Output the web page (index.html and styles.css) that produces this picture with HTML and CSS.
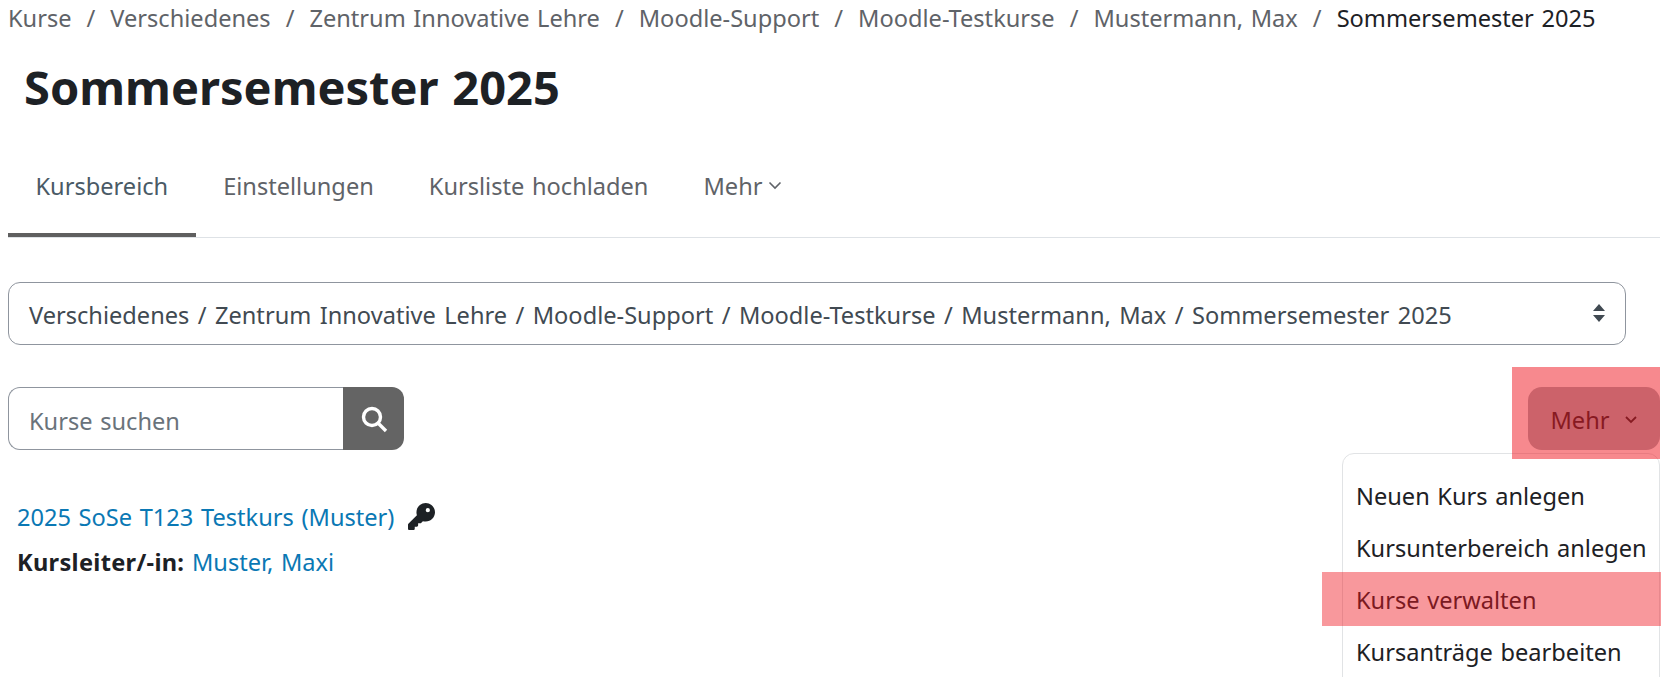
FILE: index.html
```html
<!DOCTYPE html>
<html lang="de">
<head>
    <meta charset="UTF-8">
    <title>Sommersemester 2025</title>
    <link rel="stylesheet" href="styles.css">
</head>
<body>
    <div class="page">
        <nav class="breadcrumb">
            <a href="#">Kurse</a><span class="sep">/</span>
            <a href="#">Verschiedenes</a><span class="sep">/</span>
            <a href="#">Zentrum Innovative Lehre</a><span class="sep">/</span>
            <a href="#">Moodle-Support</a><span class="sep">/</span>
            <a href="#">Moodle-Testkurse</a><span class="sep">/</span>
            <a href="#">Mustermann, Max</a><span class="sep">/</span>
            <span class="current">Sommersemester 2025</span>
        </nav>

        <h1 class="page-title">Sommersemester 2025</h1>

        <div class="tabs">
            <a href="#" class="tab active">Kursbereich</a>
            <a href="#" class="tab">Einstellungen</a>
            <a href="#" class="tab">Kursliste hochladen</a>
            <a href="#" class="tab">Mehr
                <svg class="tab-caret" viewBox="0 0 14 9"><path d="M1.5 1.5 7 7l5.5-5.5"/></svg>
            </a>
        </div>

        <div class="category-select">
            <span>Verschiedenes / Zentrum Innovative Lehre / Moodle-Support / Moodle-Testkurse / Mustermann, Max / Sommersemester 2025</span>
            <svg class="select-arrows" viewBox="0 0 14 20"><path d="M7 1 13 8H1zM7 19 1 12h12z"/></svg>
        </div>

        <div class="toolbar">
            <div class="search">
                <div class="search-input">Kurse suchen</div>
                <button class="search-button">
                    <svg viewBox="0 0 28 28"><circle cx="12" cy="12" r="8.5"/><path d="M18 18l8 8"/></svg>
                </button>
            </div>
            <div class="more">
                <button class="more-button">Mehr
                    <svg class="more-caret" viewBox="0 0 14 9"><path d="M2 2l5 5 5-5"/></svg>
                </button>
                <div class="more-menu">
                    <a href="#">Neuen Kurs anlegen</a>
                    <a href="#">Kursunterbereich anlegen</a>
                    <a href="#">Kurse verwalten</a>
                    <a href="#">Kursanträge bearbeiten</a>
                </div>
                <div class="mark mark-button"></div>
                <div class="mark mark-item"></div>
            </div>
        </div>

        <div class="course">
            <div class="course-name">
                <a href="#">2025 SoSe T123 Testkurs (Muster)</a>
                <svg class="key" viewBox="0 0 512 512"><path d="M336 0c-97 0-176 79-176 176 0 19 3 37 9 54L7 392c-4 4-7 10-7 17v79c0 13 11 24 24 24h80c13 0 24-11 24-24v-40h40c13 0 24-11 24-24v-40h40c6 0 12-3 17-7l33-33c17 6 35 9 54 9 97 0 176-79 176-176S433 0 336 0zm40 176a40 40 0 1 1 0-80 40 40 0 0 1 0 80z"/></svg>
            </div>
            <div class="course-teacher"><strong>Kursleiter/-in:</strong> <a href="#">Muster, Maxi</a></div>
        </div>
    </div>
</body>
</html>
```

FILE: styles.css
```css
* {
    margin: 0;
    padding: 0;
    box-sizing: border-box;
}

html, body {
    height: 100%;
    overflow: hidden;
}

body {
    font-family: "Noto Sans", sans-serif;
    font-size: 23.6px;
    word-spacing: 1.5px;
    color: #1d2125;
    background: white;
}

a {
    text-decoration: none;
}

.page {
    width: 1660px;
    padding-left: 8px;
}

.breadcrumb {
    height: 36px;
    display: flex;
    align-items: center;
    white-space: nowrap;
    color: #5f6368;
}

.breadcrumb a {
    color: #5f6368;
}

.breadcrumb .sep {
    margin: 0 15px;
}

.breadcrumb .current {
    color: #1d2125;
}

.page-title {
    font-size: 47px;
    font-weight: 700;
    line-height: 60px;
    margin: 21px 0 0 16px;
}

.tabs {
    display: flex;
    margin-top: 40px;
    height: 81px;
    border-bottom: 1px solid #dee2e6;
}

.tab {
    color: #5f6368;
    padding: 0 27.5px;
    line-height: 58px;
    height: 80px;
}

.tab.active {
    color: #4a5a66;
    border-bottom: 4px solid #5f5f5f;
}

.tab-caret {
    width: 14px;
    height: 9px;
    margin-left: -2px;
    vertical-align: 5px;
    fill: none;
    stroke: #5f6368;
    stroke-width: 1.6;
}

.category-select {
    display: flex;
    align-items: center;
    justify-content: space-between;
    height: 63px;
    width: 1618px;
    margin-top: 44px;
    padding: 2px 19px 0 20px;
    border: 1px solid #8f959e;
    border-radius: 12px;
    color: #414a52;
    word-spacing: 2.3px;
}

.select-arrows {
    width: 14px;
    height: 20px;
    margin-top: -4px;
    fill: #414a52;
}

.toolbar {
    display: flex;
    justify-content: space-between;
    margin-top: 42px;
}

.search {
    display: flex;
    width: 396px;
    height: 63px;
}

.search-input {
    flex: 1;
    display: flex;
    align-items: center;
    padding: 4px 0 0 20px;
    color: #6a737b;
    border: 1px solid #8f959e;
    border-right: none;
    border-radius: 12px 0 0 12px;
}

.search-button {
    width: 61px;
    background: #646464;
    border: none;
    border-radius: 0 12px 12px 0;
    display: flex;
    align-items: center;
    justify-content: center;
}

.search-button svg {
    width: 28px;
    height: 28px;
    fill: none;
    stroke: white;
    stroke-width: 3.4;
}

.more {
    position: relative;
    width: 132px;
}

.more-button {
    width: 132px;
    height: 63px;
    padding-top: 2px;
    font: inherit;
    color: #1d2125;
    background: #a8b0b6;
    border: none;
    border-radius: 14px;
    display: flex;
    align-items: center;
    justify-content: center;
    gap: 14px;
}

.more-caret {
    width: 14px;
    height: 9px;
    fill: none;
    stroke: #1d2125;
    stroke-width: 1.8;
}

.more-menu {
    position: absolute;
    top: 66px;
    right: 0;
    width: 318px;
    height: 240px;
    padding: 16px 0 0 13px;
    background: white;
    border: 1px solid #e1e3e5;
    border-radius: 12px;
    white-space: nowrap;
}

.more-menu a {
    display: block;
    height: 52px;
    line-height: 52px;
    color: #1d2125;
}

/* red highlight drawn over the screenshot */
.mark {
    position: absolute;
    right: 0;
    background: rgba(240, 20, 30, 0.5);
}

.mark-button {
    top: -20px;
    width: 148px;
    height: 92px;
}

.mark-item {
    top: 185px;
    width: 339px;
    height: 54px;
    right: -1px;
    background: rgba(240, 20, 30, 0.44);
}

.course {
    margin: 45px 0 0 9px;
}

.course-name {
    display: flex;
    align-items: center;
    height: 44px;
}

.course a {
    color: #0a78b4;
}

.key {
    width: 27px;
    height: 27px;
    margin-left: 14px;
    margin-top: -2px;
    fill: #1d2125;
}

.course-teacher {
    margin-top: 7px;
}

.course-teacher strong {
    letter-spacing: 0.3px;
}
```
